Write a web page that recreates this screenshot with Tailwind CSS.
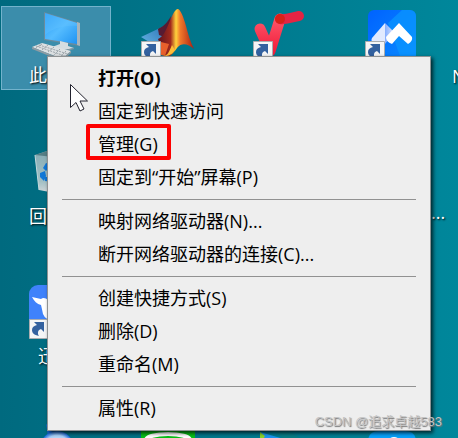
<!DOCTYPE html>
<html lang="zh-CN">
<head>
<meta charset="utf-8">
<title>桌面</title>
<script src="https://cdn.jsdelivr.net/npm/@tailwindcss/browser@4"></script>
</head>
<body class="font-['Open_Sans','Noto_Sans_CJK_SC',sans-serif] text-lg">
<svg width="0" height="0" class="absolute" aria-hidden="true">
  <defs>
    <linearGradient id="screen" x1="0" y1="0" x2="1" y2="1"><stop offset="0" stop-color="#2a9cf5"/><stop offset=".5" stop-color="#55bcff"/><stop offset="1" stop-color="#1f93f2"/></linearGradient>
    <linearGradient id="peak" x1="0" y1="0" x2="1" y2="0"><stop offset="0" stop-color="#5a1420"/><stop offset=".35" stop-color="#a32a1c"/><stop offset=".5" stop-color="#ffd23c"/><stop offset=".62" stop-color="#f0782a"/><stop offset="1" stop-color="#a81e12"/></linearGradient>
    <linearGradient id="wing" x1="0" y1="1" x2="1" y2="0"><stop offset="0" stop-color="#67b8e6"/><stop offset="1" stop-color="#1d5fa8"/></linearGradient>
    <linearGradient id="tick" x1="0" y1="0" x2="0" y2="1"><stop offset="0" stop-color="#ff5468"/><stop offset="1" stop-color="#f01f3c"/></linearGradient>
    <linearGradient id="meet" x1="0" y1="0" x2="1" y2="1"><stop offset="0" stop-color="#0062ff"/><stop offset="1" stop-color="#0a8cff"/></linearGradient>
    <linearGradient id="fold" x1="0" y1="0" x2="1" y2="0"><stop offset="0" stop-color="#86aeff"/><stop offset="1" stop-color="#dbe7ff"/></linearGradient>
    <linearGradient id="bin" x1="0" y1="0" x2="0" y2="1"><stop offset="0" stop-color="#8fb0b8"/><stop offset=".7" stop-color="#a9c4c8"/><stop offset="1" stop-color="#e3dfe0"/></linearGradient>
    <radialGradient id="ball"><stop offset="0" stop-color="#e4f1ff"/><stop offset=".75" stop-color="#a9d0f8"/><stop offset="1" stop-color="#1667d8"/></radialGradient>
    <symbol id="shortcut" viewBox="0 0 20 20">
      <path d="M.5 .5h19v19H.5z" fill="#f4f5f6" stroke="#a9adb0"/>
      <path d="M5 3h10v10l-3-3c-3 1-4 4-2 7-5-1-7-3-7-6 0-3 2-4 5-5z" fill="#33619f"/>
    </symbol>
  </defs>
</svg>

<main class="relative min-h-screen overflow-hidden bg-linear-to-r from-[#006a7f] to-[#00879b]">
  <figure class="absolute left-px top-1.5 flex h-[84px] w-[110px] flex-col items-center border border-[#73b3cc] bg-[#3b8dab] pt-1 text-white">
    <svg class="h-13 w-14 shrink-0" viewBox="0 0 56 52" aria-hidden="true">
      <path d="M16 1l36 11v23l-36-6z" fill="#6c8b9b"/>
      <path d="M17 2l32 10v21l-32-5z" fill="url(#screen)"/>
      <path d="M17 2l32 10v3C34 14 24 18 17 24z" fill="#65c3ff" opacity=".35"/>
      <path d="M49 11l3 1v23l-3-1z" fill="#a6b5bd"/>
      <path d="M32 30l8 2v3l6 2-10 2-12-3 8-3z" fill="#d4dde1"/>
      <path d="M24 36l12 3 10-2v1l-10 3-12-3z" fill="#86979f"/>
      <path d="M14 32l29 8-9 8L4 36z" fill="#dde1e3"/>
      <path d="M4 36l30 12 9-8v2l-9 8L4 38z" fill="#8e9ca3"/>
      <path d="M11 34l29 9M8 35l29 10M14 33l-6 4M20 34l-6 5M26 36l-6 5M32 38l-6 6M38 40l-6 6" stroke="#8c969c" stroke-width=".8" stroke-dasharray="2 1"/>
    </svg>
    <figcaption class="leading-6 text-shadow-[1px_1px_2px_black]">此电脑</figcaption>
  </figure>

  <svg class="absolute left-35 top-2 h-14 w-15" viewBox="0 0 60 56" role="img" aria-label="MATLAB">
    <path d="M1 29l19-9c5-3 8-1 12-9l-7 27-6 2z" fill="url(#wing)"/>
    <path d="M18 21c6-3 9-6 13-13l-4 22-8-3z" fill="#571b32"/>
    <path d="M18 31c9-3 12-24 18-29 3-4 7 5 10 16 2 8 4 15 8 23-6-5-12-7-17-1-5 7-7 9-12 9z" fill="url(#peak)"/>
    <path d="M21 34l8 2-4 12-4-1z" fill="#e8602b"/>
    <path d="M24 48c4-1 5-4 8-11l3 5c-3 4-5 6-11 6z" fill="#ffbd36"/>
    <use href="#shortcut" x="1" y="33" width="20" height="20"/>
  </svg>

  <svg class="absolute left-63 top-2 h-14 w-14" viewBox="0 0 56 56" role="img" aria-label="快捷方式">
    <path d="M8 21l10 22 10-32" fill="none" stroke="url(#tick)" stroke-width="11" stroke-linecap="round" stroke-linejoin="round"/>
    <path d="M28 11c8 1 12-2 19-3" fill="none" stroke="#e52443" stroke-width="10" stroke-linecap="round"/>
    <circle cx="28" cy="11" r="5" fill="#d92118"/>
    <use href="#shortcut" x="1" y="33" width="20" height="20"/>
  </svg>

  <svg class="absolute left-91 top-2 h-14 w-14" viewBox="0 0 56 56" role="img" aria-label="腾讯会议">
    <rect x="4" y="2" width="48" height="50" rx="6" fill="url(#meet)"/>
    <path d="M24 15L38 2h8a6 6 0 0 1 6 6v40H36z" fill="#0996ff" opacity=".75"/>
    <path d="M8 30l13-15v21l-10-1q-5-1-3-5z" fill="#e1eaff"/>
    <path d="M21 15l9 9-9 12z" fill="url(#fold)"/>
    <path d="M35 15l13 14q1 4-4 7l-9-8-7 8q-6-2-6-7z" fill="#fff"/>
    <use href="#shortcut" x="1" y="33" width="20" height="20"/>
  </svg>

  <span class="absolute left-[452px] top-16 whitespace-nowrap leading-6 text-white text-shadow-[1px_1px_2px_black]">N</span>
  <span class="absolute left-[431px] top-50 leading-6 text-white text-shadow-[1px_1px_2px_black]">...</span>

  <figure class="absolute left-px top-36 flex w-[110px] flex-col items-center text-white">
    <svg class="h-15 w-11" viewBox="0 0 44 60" aria-hidden="true">
      <path d="M1 11l12-4 29 4-5 35-11 4-21-4z" fill="url(#bin)" opacity=".95"/>
      <path d="M1 11l12-4 29 4-12 3z" fill="#557e85"/>
      <path d="M1 11l4 35" stroke="#c4d8dc"/>
      <path d="M9 24l3-5 4 1 2 6-4-1-2 2zM6 29l5-2 1 5-2 5-4-4zM11 33h8v5l-8-1z" fill="#1177d6"/>
    </svg>
    <figcaption class="leading-6 text-shadow-[1px_1px_2px_black]">回收站</figcaption>
  </figure>

  <figure class="absolute left-px top-71 flex w-[110px] flex-col items-center text-white">
    <svg class="h-15 w-14" viewBox="0 0 56 60" aria-hidden="true">
      <rect x="1" y="1" width="54" height="54" rx="9" fill="#3f82fb"/>
      <path d="M4 13c3 1 6 1 9 2 2-2 5-1 7 1l22 0-16 20q-8 1-11-6-1-5-2-9c-4-1-7-4-9-8z" fill="#fff"/>
      <use href="#shortcut" x="1" y="35" width="20" height="20"/>
    </svg>
    <figcaption class="leading-6 text-shadow-[1px_1px_2px_black]">迅雷</figcaption>
  </figure>

  <svg class="absolute left-10 top-106 h-8 w-10" viewBox="0 0 40 32" aria-hidden="true"><path d="M6 0l8 6-6 6z" fill="#1667d8"/><circle cx="17" cy="24" r="17" fill="url(#ball)"/></svg>
  <svg class="absolute left-35 top-107 h-8 w-15" viewBox="0 0 60 32" aria-hidden="true"><path d="M1 0h54v32H1z" fill="#08bf17"/><ellipse cx="28" cy="12" rx="22" ry="6" fill="none" stroke="#fff" stroke-width="4"/></svg>
  <svg class="absolute left-65 top-107 h-8 w-12" viewBox="0 0 48 32" aria-hidden="true"><path d="M16 4q19-2 26 9l-8 6z" fill="#087c85"/><path d="M0 4l34 10-26 14z" fill="#1a95ef"/><path d="M0 4l5 4-5 8z" fill="#8bd62b"/></svg>
  <svg class="absolute left-91 top-107 h-8 w-14" viewBox="0 0 56 32" aria-hidden="true"><path d="M4 14q0-11 11-11h26q11 0 11 11v18H4z" fill="#08a2fb"/><circle cx="30" cy="16" r="7" fill="#fff"/></svg>

  <div role="menu" aria-label="此电脑" class="absolute left-[47px] right-[27px] top-14 flex flex-col border border-[#8f9293] bg-[#eeeeee] py-[5px] text-black shadow-[2px_2px_4px_rgba(0,0,0,0.75)]">
    <button role="menuitem" class="h-[33px] pb-0.5 pl-[50px] text-left font-bold">打开(O)</button>
    <button role="menuitem" class="h-[33px] pb-0.5 pl-[50px] text-left">固定到快速访问</button>
    <button role="menuitem" class="relative h-[33px] pb-0.5 pl-[50px] text-left">管理(G)<span class="absolute -top-1 left-[38px] h-9 w-[85px] rounded-xs border-4 border-[#fe0000]"></span></button>
    <button role="menuitem" class="h-[33px] pb-0.5 pl-[50px] text-left">固定到“开始”屏幕(P)</button>
    <hr class="mx-3.5 my-[5px] border-[#919191]">
    <button role="menuitem" class="h-[33px] pb-0.5 pl-[50px] text-left">映射网络驱动器(N)...</button>
    <button role="menuitem" class="h-[33px] pb-0.5 pl-[50px] text-left">断开网络驱动器的连接(C)...</button>
    <hr class="mx-3.5 my-[5px] border-[#919191]">
    <button role="menuitem" class="h-[33px] pb-0.5 pl-[50px] text-left">创建快捷方式(S)</button>
    <button role="menuitem" class="h-[33px] pb-0.5 pl-[50px] text-left">删除(D)</button>
    <button role="menuitem" class="h-[33px] pb-0.5 pl-[50px] text-left">重命名(M)</button>
    <hr class="mx-3.5 my-[5px] border-[#919191]">
    <button role="menuitem" class="h-[33px] pb-0.5 pl-[50px] text-left">属性(R)</button>
  </div>

  <svg class="absolute left-[70px] top-[84px] h-7 w-5" viewBox="0 0 20 28" aria-hidden="true"><path d="M.5 .5v23l5.500-5 4 8.500 4-2-4-8h7.500z" fill="#fff" stroke="#22222e"/></svg>
  <p class="absolute bottom-1.5 right-4 font-['Liberation_Sans','Noto_Sans_CJK_SC',sans-serif] text-[13px] text-[#c4c4c4] text-shadow-[1px_1px_1px_#777777]">CSDN @追求卓越583</p>
</main>
</body>
</html>
